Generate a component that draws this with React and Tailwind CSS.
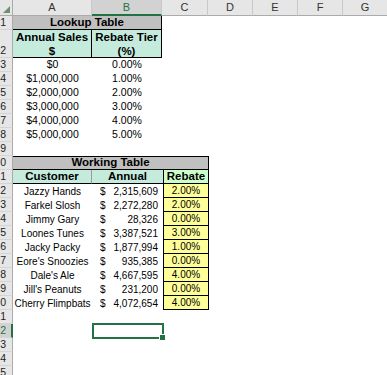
import React from "react";

const columns = [
  { key: "A", w: "w-[79px]" },
  { key: "B", w: "w-[70px]", active: true },
  { key: "C", w: "w-[46px]" },
  { key: "D", w: "w-[45px]" },
  { key: "E", w: "w-[45px]" },
  { key: "F", w: "w-[45px]" },
  { key: "G", w: "w-[45px]" },
];

const tiers = [
  ["$0", "0.00%"],
  ["$1,000,000", "1.00%"],
  ["$2,000,000", "2.00%"],
  ["$3,000,000", "3.00%"],
  ["$4,000,000", "4.00%"],
  ["$5,000,000", "5.00%"],
];

const customers = [
  ["Jazzy Hands", "2,315,609", "2.00%"],
  ["Farkel Slosh", "2,272,280", "2.00%"],
  ["Jimmy Gary", "28,326", "0.00%"],
  ["Loones Tunes", "3,387,521", "3.00%"],
  ["Jacky Packy", "1,877,994", "1.00%"],
  ["Eore's Snoozies", "935,385", "0.00%"],
  ["Dale's Ale", "4,667,595", "4.00%"],
  ["Jill's Peanuts", "231,200", "0.00%"],
  ["Cherry Flimpbats", "4,072,654", "4.00%"],
];

// the sheet is cropped at the left, so only the last digit of the row number shows
const RowHead = ({ n, active }) => (
  <div
    className={
      "w-[13px] shrink-0 flex justify-end items-end border-b border-[#d4d4d4] pb-[1px] text-[10.5px] leading-[12px] " +
      (active
        ? "bg-[#d2d2d2] text-[#217346] border-r-2 border-r-[#217346] pr-[5px]"
        : "bg-[#e6e6e6] text-[#222] border-r border-r-[#ababab] pr-[6px]")
    }
  >
    {n % 10}
  </div>
);

const Row = ({ n, h = "h-[14px]", active, children }) => (
  <div className={"flex " + h}>
    <RowHead n={n} active={active} />
    {children}
  </div>
);

const ColumnHeader = () => (
  <div className="flex h-[16px]">
    <div className="w-[13px] shrink-0 bg-[#e6e6e6] border-r border-b border-[#ababab] relative">
      <svg className="absolute right-[2px] bottom-[2px]" width="7" height="7" viewBox="0 0 7 7">
        <polygon points="7,0 7,7 0,7" fill="#6f8f74" />
      </svg>
    </div>
    {columns.map((c) => (
      <div
        key={c.key}
        className={
          c.w +
          " shrink-0 flex items-center justify-center text-[11px] border-r border-r-[#c8c8c8] " +
          (c.active
            ? "bg-[#d2d2d2] text-[#217346] border-b-2 border-b-[#217346]"
            : "bg-[#e6e6e6] text-[#333] border-b border-b-[#ababab]")
        }
      >
        {c.key}
      </div>
    ))}
  </div>
);

export default function App() {
  const teal = "bg-[#c5ebdd]";
  return (
    <div className="w-[387px] h-[375px] overflow-hidden bg-white font-['Liberation_Sans',Arial,sans-serif] text-black">
      <ColumnHeader />

      <Row n={1}>
        <div className="w-[149px] bg-[#c0c0c0] border-r border-b border-black flex items-center justify-center font-bold text-[11.5px]">
          Lookup Table
        </div>
      </Row>
      <Row n={2} h="h-[28px]">
        <div className={"w-[79px] " + teal + " border-r border-b border-black flex flex-col items-center justify-center font-bold text-[11.5px] leading-[14px]"}>
          <span>Annual Sales</span>
          <span>$</span>
        </div>
        <div className={"w-[70px] " + teal + " border-r border-b border-black flex flex-col items-center justify-center font-bold text-[11.5px] leading-[14px]"}>
          <span>Rebate Tier</span>
          <span>(%)</span>
        </div>
      </Row>

      {tiers.map(([sales, pct], i) => (
        <Row key={sales} n={i + 3}>
          <div className="w-[79px] flex items-center justify-center text-[10.5px]">{sales}</div>
          <div className="w-[70px] flex items-center justify-center text-[10.5px]">{pct}</div>
        </Row>
      ))}

      <Row n={9} />

      <Row n={10}>
        <div className="w-[196px] bg-[#c0c0c0] border-t border-r border-b border-black flex items-center justify-center font-bold text-[11.5px]">
          Working Table
        </div>
      </Row>
      <Row n={11}>
        <div className={"w-[79px] " + teal + " border-r border-r-[#9a9a9a] border-b border-b-black flex items-center justify-center font-bold text-[11.5px]"}>
          Customer
        </div>
        <div className={"w-[71px] " + teal + " border-b border-black flex items-center justify-center font-bold text-[11.5px]"}>
          Annual
        </div>
        <div className="w-[46px] bg-[#ccffcc] border-l border-r border-b border-black flex items-center justify-center font-bold text-[11.5px]">
          Rebate
        </div>
      </Row>

      {customers.map(([name, amount, pct], i) => (
        <Row key={name} n={i + 12}>
          <div className="w-[79px] flex items-center justify-center text-[10px] whitespace-nowrap">{name}</div>
          <div className="w-[71px] flex items-center justify-between pl-[8px] pr-[5px] text-[10px]">
            <span>$</span>
            <span>{amount}</span>
          </div>
          <div className="w-[46px] bg-[#ffff99] border-l border-r border-b border-black flex items-center justify-center text-[10px]">
            {pct}
          </div>
        </Row>
      ))}

      <Row n={21} />
      <Row n={22} active>
        <div className="w-[79px]" />
        <div className="w-[71px] relative">
          <div className="absolute -top-[1px] left-0 -right-[1px] -bottom-[1px] border-2 border-[#217346]" />
          <div className="absolute -right-[3px] -bottom-[3px] w-[5px] h-[5px] bg-[#217346] border border-white box-content" />
        </div>
      </Row>
      <Row n={23} />
      <Row n={24} />
      <Row n={25} />
    </div>
  );
}
